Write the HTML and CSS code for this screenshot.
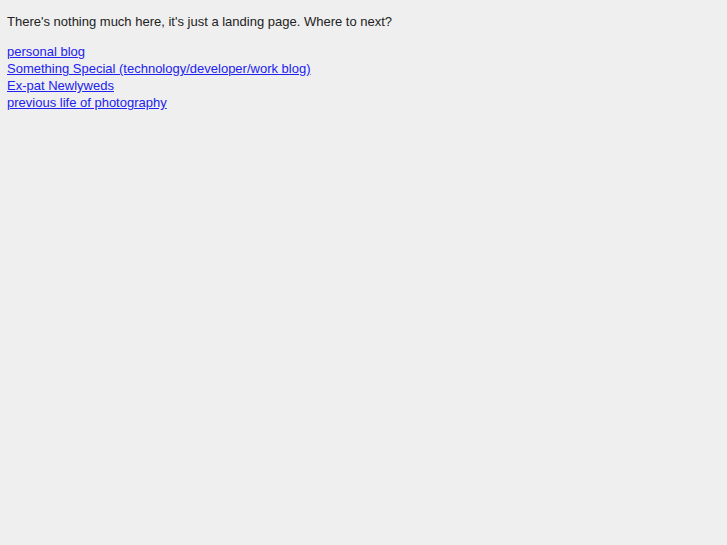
FILE: index.html
```html
<!DOCTYPE html>
<html lang="en">
<head>
    <meta charset="UTF-8">
    <title>Landing page</title>
    <link rel="stylesheet" href="styles.css">
</head>
<body>
    <p>There's nothing much here, it's just a landing page. Where to next?</p>

    <div class="links">
        <a href="#">personal blog </a><br>
        <a href="#">Something Special (technology/developer/work blog) </a><br>
        <a href="#">Ex-pat Newlyweds </a><br>
        <a href="#">previous life of photography </a>
    </div>
</body>
</html>
```

FILE: styles.css
```css
body {
    margin: 0 7px;
    padding-top: 13px;
    background: #efefef;
    color: #222;
    font-family: "Liberation Sans", Arial, sans-serif;
    font-size: 13px;
    line-height: 17px;
}

p {
    margin: 0 0 13px;
}

a {
    color: #2222ee;
}
```
